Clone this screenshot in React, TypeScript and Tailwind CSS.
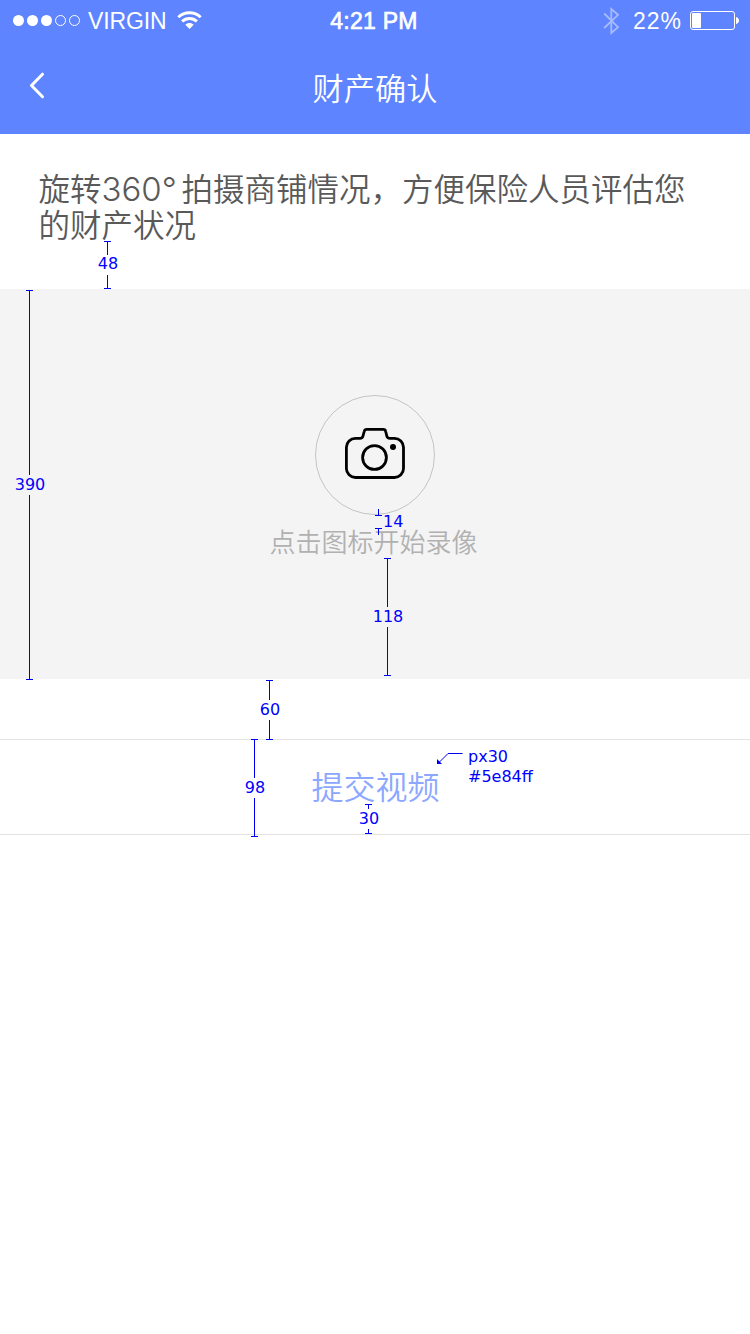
import React from "react";

type RulerProps = { className: string; labelClass: string; label: string };

function Ruler({ className, labelClass, label }: RulerProps) {
  return (
    <div className={`absolute flex w-[7px] flex-col items-center ${className}`}>
      <div className="h-px w-[7px] shrink-0 bg-[#0000f0]" />
      <div className="w-px flex-1 bg-[#0000f0]" />
      <div className={`flex shrink-0 items-center justify-center ${labelClass}`}>
        <span className="whitespace-nowrap pl-px">{label}</span>
      </div>
      <div className="w-px flex-1 bg-[#0000f0]" />
      <div className="h-px w-[7px] shrink-0 bg-[#0000f0]" />
    </div>
  );
}

function StatusBar() {
  return (
    <div className="flex h-[42px] items-center font-['Liberation_Sans',sans-serif] text-[23px] leading-[42px]">
      <div className="flex w-[250px] items-center pl-[13px]">
        <svg width="68" height="12" viewBox="0 0 68 12" fill="none" stroke="white">
          <circle cx="5.5" cy="5.5" r="5.5" fill="white" stroke="none" />
          <circle cx="19.5" cy="5.5" r="5.5" fill="white" stroke="none" />
          <circle cx="33.5" cy="5.5" r="5.5" fill="white" stroke="none" />
          <circle cx="47.5" cy="5.5" r="5" />
          <circle cx="61.5" cy="5.5" r="5" />
        </svg>
        <span className="ml-[7px] w-[78px] whitespace-nowrap tracking-[-0.1px]">VIRGIN</span>
        <svg className="ml-[11px]" width="25" height="20" viewBox="0 0 25 20" fill="none" stroke="white">
          <path d="M1.3 6.3C7.5 .2 17.5 .2 23.7 6.3" strokeWidth="3" />
          <path d="M5.1 10.4C9.2 6.5 15.8 6.5 19.9 10.4" strokeWidth="3" />
          <path d="M8.3 13.8C10.5 11.5 14.5 11.5 16.7 13.8L12.5 18Z" fill="white" stroke="none" />
        </svg>
      </div>
      <div className="flex w-[248px] justify-center tracking-[0.25px] [-webkit-text-stroke:0.7px_white]">4:21 PM</div>
      <div className="flex flex-1 items-center justify-end pr-[10px]">
        <svg className="mr-[13px] opacity-45" width="17" height="28" viewBox="0 0 17 28" fill="none" stroke="white" strokeWidth="1.8">
          <path d="M1.2 6.5L15 20.1L8.3 26V2L15 7.8L1.2 21" />
        </svg>
        <span className="w-[49px] whitespace-nowrap tracking-[0.9px]">22%</span>
        <svg className="ml-[8px]" width="50" height="20" viewBox="0 0 50 20" fill="none">
          <rect x=".5" y=".5" width="44" height="18" rx="2.5" stroke="white" />
          <rect x="2" y="2" width="9" height="15" rx="1" fill="white" />
          <path d="M46 6C50 7 50 12 46 13Z" fill="white" />
        </svg>
      </div>
    </div>
  );
}

function CameraIcon() {
  return (
    <svg className="mb-[4px]" width="62" height="54" viewBox="0 0 62 54" fill="none" stroke="black" strokeWidth="2.8">
      <path d="M11.400 12.300H16C18 12.300 18.600 11.800 19 10L20.200 5.500Q20.700 3.400 22.700 3.400H39.300Q41.300 3.400 41.700 5.500L42.800 10C43.200 11.800 44 12.300 46 12.300H50.500A9 9 0 0 1 59.500 21.300V42.500A9 9 0 0 1 50.500 51.500H11.400A9 9 0 0 1 2.400 42.500V21.300A9 9 0 0 1 11.400 12.300Z" />
      <circle cx="30.500" cy="31.500" r="11.900" />
      <circle cx="49" cy="21" r="3" fill="black" stroke="none" />
    </svg>
  );
}

export default function App() {
  return (
    <div className="relative flex h-[1334px] w-[750px] flex-col overflow-hidden bg-white font-['Noto_Sans_CJK_SC',sans-serif] font-[350]">
      <header className="h-[134px] bg-[#5e84ff] text-white">
        <StatusBar />
        <div className="grid h-[92px] grid-cols-[150px_1fr_150px] items-center">
          <button aria-label="返回" className="mb-[5px] flex pl-[28px]">
            <svg width="18" height="28" viewBox="0 0 18 28" fill="none" stroke="white" strokeWidth="3" strokeLinecap="round" strokeLinejoin="round">
              <path d="M14.5 2.2L3.500 13.500L14.500 24.800" />
            </svg>
          </button>
          <h1 className="mb-[2px] text-center text-[31.2px] leading-[40px]">财产确认</h1>
        </div>
      </header>

      <section className="h-[155px] whitespace-nowrap pt-[35px] pl-[38.5px] text-[31.5px] leading-[36px] text-[#595959]">
        <p className="flex h-[36px]">
          <span>旋转</span>
          <span className="w-[80px] pt-[2px] font-['Inter',sans-serif] text-[33px] font-light">360°</span>
          <span>拍摄商铺情况，方便保险人员评估您</span>
        </p>
        <p className="h-[36px]">的财产状况</p>
      </section>

      <section className="flex h-[390px] flex-col items-center bg-[#f4f4f4] pt-[106px]">
        <button aria-label="录像" className="flex size-[120px] items-center justify-center rounded-full border border-[#c4c4c4]">
          <CameraIcon />
        </button>
        <p className="mt-[9px] mr-[3px] text-[26px] leading-[34px] text-[#b1b1b1]">点击图标开始录像</p>
      </section>

      <button className="mt-[60px] flex h-[96px] items-center justify-center border-y border-[#e3e3e3] pb-[4px] pl-px text-[32px] leading-[40px] text-[#8ca7ff]">
        提交视频
      </button>

      <div className="pointer-events-none absolute inset-0 font-['DejaVu_Sans',sans-serif] text-[16px] font-normal leading-[18px] text-[#0000ff]">
        <Ruler className="top-[241px] left-[104px] h-[48px]" labelClass="h-[20px] pb-[2px]" label="48" />
        <Ruler className="top-[290px] left-[26px] h-[390px]" labelClass="h-[20px]" label="390" />
        <Ruler className="top-[558px] left-[384px] h-[118px]" labelClass="h-[20px]" label="118" />
        <Ruler className="top-[680px] left-[266px] h-[60px]" labelClass="h-[20px]" label="60" />
        <Ruler className="top-[739px] left-[251px] h-[98px]" labelClass="h-[20px]" label="98" />
        <Ruler className="top-[804px] left-[365px] h-[30px]" labelClass="h-[20px]" label="30" />
        <svg className="absolute top-[509px] left-[375px]" width="7" height="26" viewBox="0 0 7 26" stroke="#0000f0">
          <path d="M3.5 0V6M0 6.5H7M0 19.5H7M3.5 19V26" />
        </svg>
        <span className="absolute top-[513px] left-[383px]">14</span>
        <svg className="absolute top-[752px] left-[436px]" width="27" height="13" viewBox="0 0 27 13" fill="none" stroke="#0000f0">
          <path d="M26.5 1.5H12L3 10.5" />
          <path d="M1 7L6 12H1Z" fill="#0000f0" stroke="none" />
        </svg>
        <p className="absolute top-[747px] left-[468px] leading-[20px]">
          px30
          <br />
          #5e84ff
        </p>
      </div>
    </div>
  );
}
